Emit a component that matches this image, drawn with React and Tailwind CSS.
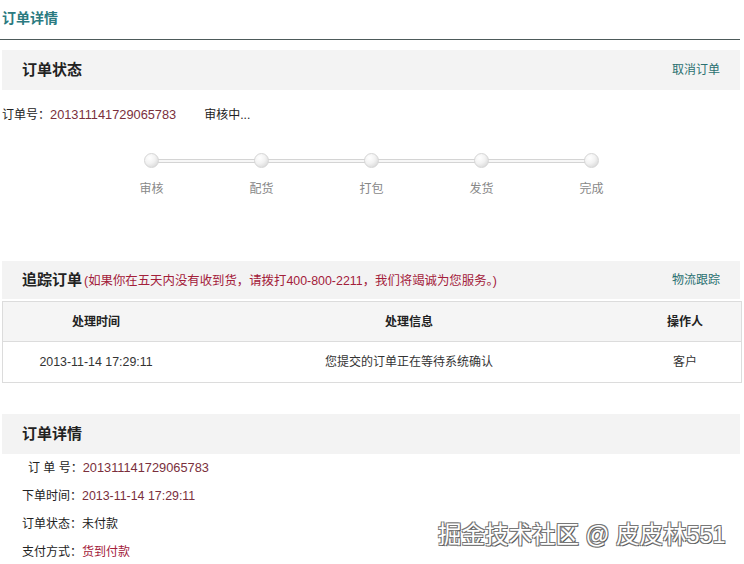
// OrderDetail.jsx

import React from "react";

const steps = ["审核", "配货", "打包", "发货", "完成"];

// Gray section header bar
const SectionHeader = ({ title, note, action, className = "" }) => (
  <div className={`flex items-center justify-between bg-[#f3f3f3] pl-5 pr-5 ${className}`}>
    <div className="flex items-baseline">
      <span className="text-[15px] font-bold text-[#222]">{title}</span>
      {note && <span className="ml-0.5 text-[12.4px] text-[#a3203a]">{note}</span>}
    </div>
    {action && <span className="text-[12px] text-[#2a7070]">{action}</span>}
  </div>
);

const Dot = () => (
  <div className="relative z-10 h-[15px] w-[15px] rounded-full border border-[#d6d6d6] bg-[radial-gradient(circle_at_35%_30%,#ffffff_0%,#f2f2f2_45%,#cfcfcf_100%)]" />
);

const App = () => {
  return (
    <div
      className="relative h-[564px] w-[744px] overflow-hidden bg-white text-[12px] text-[#333]"
      style={{ fontFamily: '"Liberation Sans", "Noto Sans CJK SC", sans-serif' }}
    >
      {/* Page title */}
      <div className="mr-1 flex h-[40px] items-start border-b border-[#4d5a5a] pl-0.5 pt-[8px]">
        <span className="text-[14px] font-bold leading-[20px] text-[#2b7a80]">订单详情</span>
      </div>

      {/* Order status */}
      <SectionHeader title="订单状态" action="取消订单" className="mt-[10px] ml-0.5 mr-1 h-[40px]" />
      <div className="flex h-[50px] items-center pl-0.5">
        <span className="text-[#222]">订单号：</span>
        <span className="text-[12.8px] text-[#7a2f3c]">201311141729065783</span>
        <span className="ml-[28px] text-[#222]">审核中...</span>
      </div>

      {/* Progress */}
      <div className="relative ml-[144px] w-[455px] pt-[13px]">
        <div className="absolute left-[7px] right-[7px] top-[19px] h-[4px] border-y border-[#d4d4d4] bg-[#f7f7f7]" />
        <div className="flex justify-between">
          {steps.map((s) => (
            <div key={s} className="flex w-[15px] flex-col items-center">
              <Dot />
              <span className="mt-[12px] whitespace-nowrap text-[12px] text-[#888]">{s}</span>
            </div>
          ))}
        </div>
      </div>

      {/* Tracking */}
      <SectionHeader
        title="追踪订单"
        note="(如果你在五天内没有收到货，请拨打400-800-2211，我们将竭诚为您服务。)"
        action="物流跟踪"
        className="mt-[63px] ml-0.5 mr-1 h-[38px]"
      />
      <div className="ml-0.5 mr-[2px] mt-[2px] border border-[#dcdcdc]">
        <div className="flex h-[40px] items-center border-b border-[#dcdcdc] bg-[#f5f5f5] text-[12px] font-bold text-[#222]">
          <div className="w-[186px] text-center">处理时间</div>
          <div className="flex-1 text-center">处理信息</div>
          <div className="w-[112px] text-center">操作人</div>
        </div>
        <div className="flex h-[40px] items-center text-[#333]">
          <div className="w-[186px] text-center text-[12.4px]">2013-11-14 17:29:11</div>
          <div className="flex-1 text-center">您提交的订单正在等待系统确认</div>
          <div className="w-[112px] text-center">客户</div>
        </div>
      </div>

      {/* Order details */}
      <SectionHeader title="订单详情" className="mt-[31px] ml-0.5 mr-1 h-[40px]" />
      <div className="pl-[22px] text-[#222]">
        <div className="flex h-[28px] items-center">
          <span className="ml-[6px]">订 单 号：</span>
          <span className="text-[12.8px] text-[#7a2f3c]">201311141729065783</span>
        </div>
        <div className="flex h-[28px] items-center">
          <span>下单时间：</span>
          <span className="text-[12.4px] text-[#7a2f3c]">2013-11-14 17:29:11</span>
        </div>
        <div className="flex h-[28px] items-center">
          <span>订单状态：</span>
          <span>未付款</span>
        </div>
        <div className="flex h-[28px] items-center">
          <span>支付方式：</span>
          <span className="text-[#a3203a]">货到付款</span>
        </div>
      </div>

      {/* Watermark */}
      <div className="absolute left-[438px] top-[518px] whitespace-nowrap text-[23.5px] text-white [text-shadow:-1px_-1px_0_#777,1px_-1px_0_#777,-1px_1px_0_#777,1px_1px_0_#555]">
        掘金技术社区 @ 皮皮林551
      </div>
    </div>
  );
};

export default App;
